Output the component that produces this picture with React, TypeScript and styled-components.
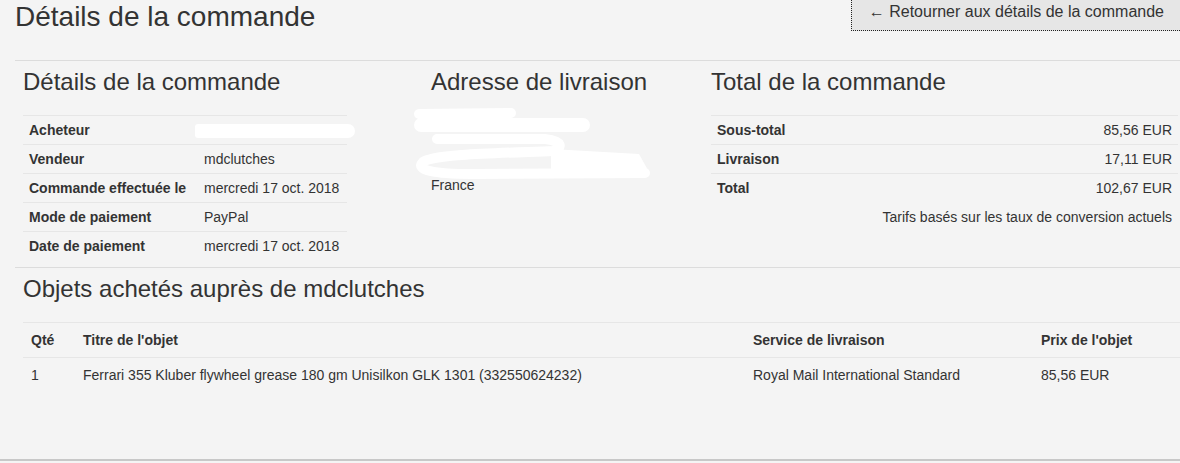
import styled, { createGlobalStyle } from "styled-components"

const GlobalStyle = createGlobalStyle`
    body {
        margin: 0;
        background: #f4f4f4;
        color: #333;
        font-family: "Liberation Sans", Arial, Helvetica, sans-serif;
        font-size: 14px;
        overflow: hidden;
    }
`

const details = [
    { label: "Acheteur", value: null },
    { label: "Vendeur", value: "mdclutches" },
    { label: "Commande effectuée le", value: "mercredi 17 oct. 2018" },
    { label: "Mode de paiement", value: "PayPal" },
    { label: "Date de paiement", value: "mercredi 17 oct. 2018" },
]

const totals = [
    { label: "Sous-total", value: "85,56 EUR" },
    { label: "Livraison", value: "17,11 EUR" },
    { label: "Total", value: "102,67 EUR" },
]

const items = [
    {
        qty: 1,
        title: "Ferrari 355 Kluber flywheel grease 180 gm Unisilkon GLK 1301 (332550624232)",
        service: "Royal Mail International Standard",
        price: "85,56 EUR",
    },
]

// the address lines are blanked out in the screenshot with a white scribble
const AddressScribble = () => (
    <Scribble width="240" height="67" viewBox="0 0 240 67">
        <g stroke="#fff" strokeLinecap="round" strokeLinejoin="round" fill="none">
            <path d="M6 6 L98 5" strokeWidth="10" />
            <path d="M8 17 L170 17" strokeWidth="14" />
            <path d="M24 31 L132 31 C150 33 150 40 140 43 C90 45 20 46 10 54 C2 62 20 66 60 66 L232 65" strokeWidth="10" />
        </g>
        <path d="M138 41 L226 46 L236 64 L138 66 Z" fill="#fff" />
    </Scribble>
)

const App = () => {
    return (
        <Frame>
            <GlobalStyle />
            <Page>
                <Header>
                    <Title>Détails de la commande</Title>
                    <BackButton type="button">← Retourner aux détails de la commande</BackButton>
                </Header>

                <Summary>
                    <div>
                        <Heading>Détails de la commande</Heading>
                        <InfoTable $width="324px">
                            <tbody>
                                {details.map((row) => (
                                    <tr key={row.label}>
                                        <Label $width="175px">{row.label}</Label>
                                        <Value>{row.value ?? <Redacted />}</Value>
                                    </tr>
                                ))}
                            </tbody>
                        </InfoTable>
                    </div>

                    <div>
                        <Heading>Adresse de livraison</Heading>
                        <AddressScribble />
                        <Address>France</Address>
                    </div>

                    <div>
                        <Heading>Total de la commande</Heading>
                        <InfoTable $width="100%">
                            <tbody>
                                {totals.map((row) => (
                                    <tr key={row.label}>
                                        <Label $width="50%">{row.label}</Label>
                                        <Value $align="right">{row.value}</Value>
                                    </tr>
                                ))}
                                <tr>
                                    <Value $align="right" $plain colSpan={2}>Tarifs basés sur les taux de conversion actuels</Value>
                                </tr>
                            </tbody>
                        </InfoTable>
                    </div>
                </Summary>

                <Items>
                    <Heading>Objets achetés auprès de mdclutches</Heading>
                    <ItemsTable>
                        <colgroup>
                            <col style={{ width: 52 }} />
                            <col style={{ width: 670 }} />
                            <col style={{ width: 288 }} />
                            <col />
                        </colgroup>
                        <thead>
                            <tr>
                                <HeadCell>Qté</HeadCell>
                                <HeadCell>Titre de l'objet</HeadCell>
                                <HeadCell>Service de livraison</HeadCell>
                                <HeadCell>Prix de l'objet</HeadCell>
                            </tr>
                        </thead>
                        <tbody>
                            {items.map((item) => (
                                <tr key={item.title}>
                                    <Cell>{item.qty}</Cell>
                                    <Cell>{item.title}</Cell>
                                    <Cell>{item.service}</Cell>
                                    <Cell>{item.price}</Cell>
                                </tr>
                            ))}
                        </tbody>
                    </ItemsTable>
                </Items>
            </Page>
        </Frame>
    )
}

export default App;

const Frame = styled.div`
    height: 459px;
    border-bottom: 2px solid #c8c8c8;
`

const Page = styled.div`
    padding-left: 15px;
`

const Header = styled.header`
    display: flex;
    justify-content: space-between;
    align-items: flex-start;
    height: 60px;
    border-bottom: 1px solid #dcdcdc;
`

const Title = styled.h1`
    margin: 0;
    font-size: 28px;
    font-weight: normal;
    line-height: 34px;
`

const BackButton = styled.button`
    box-sizing: border-box;
    height: 31px;
    padding: 0 16px 7px 17px;
    border: none;
    border-left: 1px dotted #222;
    border-bottom: 1px dotted #222;
    background: #e6e6e6;
    color: #333;
    font-family: inherit;
    font-size: 16px;
    line-height: 24px;
    white-space: nowrap;
`

const Summary = styled.section`
    display: grid;
    grid-template-columns: 408px 280px 1fr;
    padding: 0 2px 7px 8px;
    border-bottom: 1px solid #dcdcdc;
`

const Heading = styled.h2`
    margin: 7px 0 19px;
    font-size: 24px;
    font-weight: normal;
    line-height: 28px;
`

const InfoTable = styled.table<{ $width: string }>`
    width: ${(p) => p.$width};
    border-collapse: collapse;
    table-layout: fixed;
`

const Label = styled.th<{ $width?: string }>`
    box-sizing: border-box;
    width: ${(p) => p.$width ?? "auto"};
    padding: 4px 6px;
    border-top: 1px solid #e6e6e6;
    font-weight: bold;
    line-height: 20px;
    text-align: left;
    white-space: nowrap;
`

const Value = styled.td<{ $align?: string; $plain?: boolean }>`
    padding: 4px 6px;
    border-top: 1px solid ${(p) => (p.$plain ? "transparent" : "#e6e6e6")};
    line-height: 20px;
    text-align: ${(p) => p.$align ?? "left"};
    white-space: nowrap;
`

const Redacted = styled.span`
    display: inline-block;
    vertical-align: middle;
    width: 160px;
    height: 14px;
    margin-left: -9px;
    background: #fff;
    border-radius: 3px 7px 7px 3px;
`

const Scribble = styled.svg`
    display: block;
    margin: -7px 0 0 -18px;
    overflow: visible;
`

const Address = styled.div`
    line-height: 20px;
`

const Items = styled.section`
    padding-left: 8px;
`

const ItemsTable = styled.table`
    width: 100%;
    border-collapse: collapse;
    table-layout: fixed;
`

const HeadCell = styled.th`
    padding: 7px 8px;
    border-top: 1px solid #e6e6e6;
    font-weight: bold;
    line-height: 20px;
    text-align: left;
`

const Cell = styled.td`
    padding: 7px 8px;
    border-top: 1px solid #e6e6e6;
    line-height: 20px;
    white-space: nowrap;
`
